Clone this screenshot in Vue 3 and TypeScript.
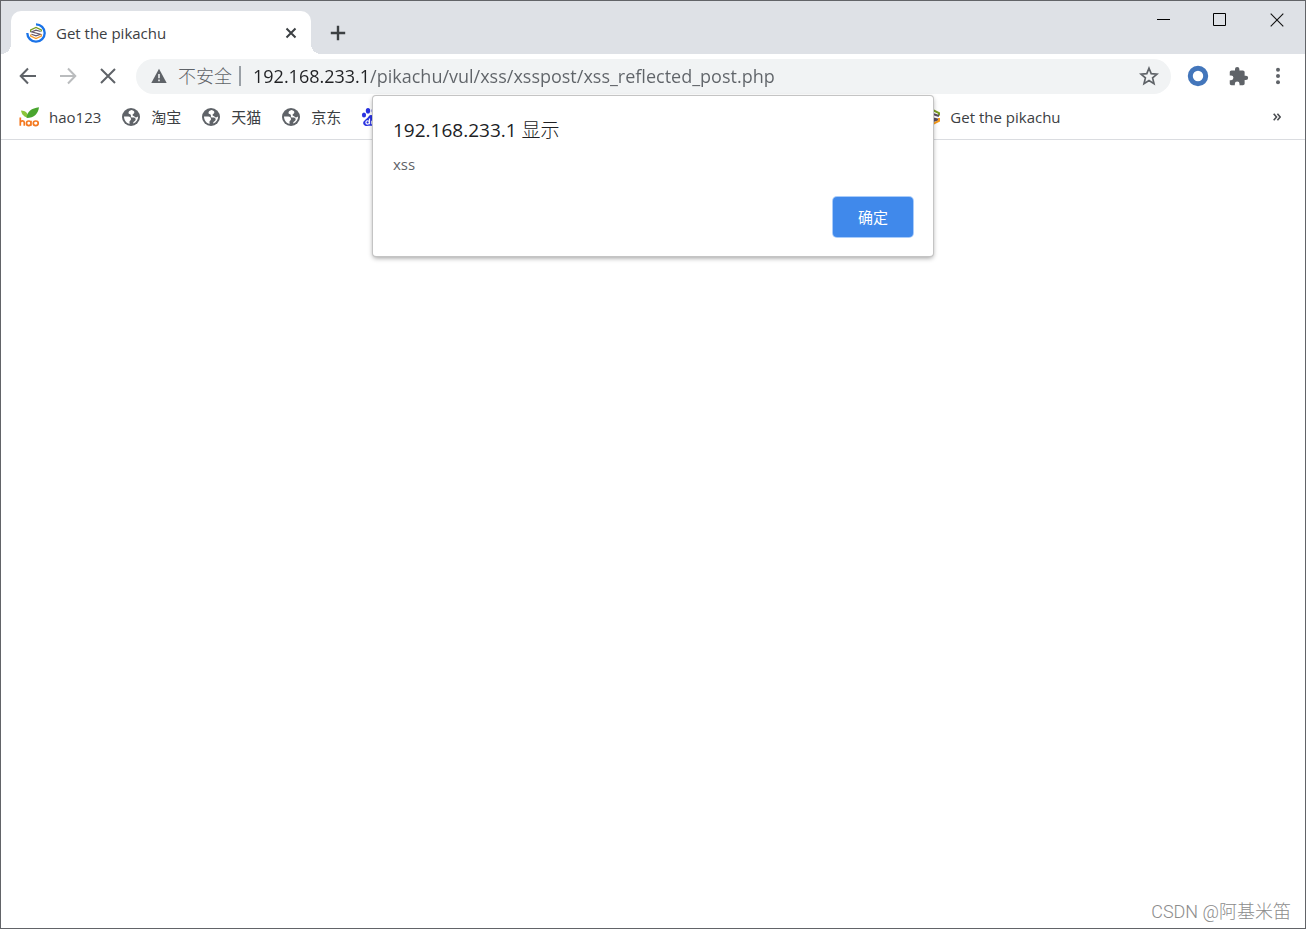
<script setup lang="ts">
import { ref } from 'vue'

interface Bookmark {
  label: string
  icon: 'hao' | 'globe'
}

const address = ref('192.168.233.1/pikachu/vul/xss/xsspost/xss_reflected_post.php')
const dialogOpen = ref(true)
const bookmarks: Bookmark[] = [
  { label: 'hao123', icon: 'hao' },
  { label: '淘宝', icon: 'globe' },
  { label: '天猫', icon: 'globe' },
  { label: '京东', icon: 'globe' },
]
</script>

<template>
  <div class="window">
    <header class="tabstrip">
      <div class="tab">
        <svg class="icon20" viewBox="0 0 20 20" aria-hidden="true">
          <path d="M10 1.3A8.7 8.7 0 1 1 1.3 10" fill="none" stroke="#1a73e8" stroke-width="2.3" />
          <path d="M4.700 9V7L10 4.500 15.300 7v1.500" fill="none" stroke="#7a9c20" stroke-width="1.300" />
          <path d="M14.600 8.500 10 7.200 5.500 8.900l9 2.400L10 12.800l-4.600-1.500" fill="none" stroke="#66566a" stroke-width="1.100" />
          <path d="M4.700 11.500V13l5.300 2.500 5.300-2.500v-1.500" fill="none" stroke="#f79a28" stroke-width="1.300" />
        </svg>
        <span class="tab-title">Get the pikachu</span>
        <button class="tab-close" aria-label="关闭标签页">
          <svg width="12" height="12" viewBox="0 0 12 12"><path d="M1.5 1.5l9 9M10.5 1.5l-9 9" stroke="#3c4043" stroke-width="2" /></svg>
        </button>
      </div>
      <button class="new-tab" aria-label="新标签页">
        <svg width="16" height="16" viewBox="0 0 16 16"><path d="M8 .8v14.4M.8 8h14.4" stroke="#3c4043" stroke-width="2.4" /></svg>
      </button>
      <div class="controls">
        <button aria-label="最小化"><svg width="14" height="14" viewBox="0 0 14 14"><path d="M1 6.5h13" stroke="#000" /></svg></button>
        <button aria-label="最大化"><svg width="14" height="14" viewBox="0 0 14 14"><path d="M.5 .5h12v12H.5z" fill="none" stroke="#000" /></svg></button>
        <button aria-label="关闭"><svg width="14" height="14" viewBox="0 0 14 14"><path d="M.7 .7l12.6 12.6M13.3 .7.7 13.3" stroke="#111" stroke-width="1.1" /></svg></button>
      </div>
    </header>

    <nav class="toolbar">
      <button class="tool" aria-label="后退">
        <svg width="18" height="18" viewBox="0 0 18 18"><path d="M17 9H2M9 1.5 1.7 9 9 16.5" fill="none" stroke="#5f6368" stroke-width="2" /></svg>
      </button>
      <button class="tool" aria-label="前进" disabled>
        <svg width="18" height="18" viewBox="0 0 18 18"><path d="M1 9h15M9 1.5 16.3 9 9 16.5" fill="none" stroke="#babcbe" stroke-width="2" /></svg>
      </button>
      <button class="tool" aria-label="停止">
        <svg width="18" height="18" viewBox="0 0 18 18"><path d="M2 2l14 14M16 2 2 16" stroke="#5f6368" stroke-width="2" /></svg>
      </button>
      <div class="omnibox">
        <svg class="warn" width="16" height="16" viewBox="0 0 16 16" aria-hidden="true">
          <path d="M8 .8 15.7 15H.3z" fill="#5f6368" />
          <path d="M8 6v4.2M8 11.4v1.9" stroke="#f1f3f4" stroke-width="1.6" />
        </svg>
        <label class="unsafe" for="address">不安全</label>
        <span class="divider"></span>
        <input id="address" v-model="address" class="address" type="text" spellcheck="false" />
        <button class="star" aria-label="为此标签页添加书签">
          <svg width="20" height="20" viewBox="0 0 20 20"><path d="m10 2.2 2.2 5.4 5.9.5-4.5 3.8 1.4 5.7-5-3.1-5 3.1 1.4-5.7-4.5-3.8 5.9-.5z" fill="none" stroke="#5f6368" stroke-width="1.7" /></svg>
        </button>
      </div>
      <button class="tool" aria-label="扩展">
        <svg width="22" height="22" viewBox="0 0 22 22"><circle cx="11" cy="11" r="7.7" fill="none" stroke="#4376bb" stroke-width="5" /></svg>
      </button>
      <button class="tool" aria-label="扩展程序">
        <svg width="21" height="21" viewBox="0 0 24 24"><path fill="#5f6368" d="M20.5 11H19V7c0-1.1-.9-2-2-2h-4V3.5a2.5 2.5 0 0 0-5 0V5H4c-1.1 0-2 .9-2 2v3.8h1.5a2.7 2.7 0 0 1 0 5.4H2V20c0 1.1.9 2 2 2h3.8v-1.5a2.7 2.7 0 0 1 5.400 0V22H17c1.1 0 2-.9 2-2v-4h1.5a2.5 2.5 0 0 0 0-5z" /></svg>
      </button>
      <button class="tool" aria-label="菜单">
        <svg width="6" height="18" viewBox="0 0 6 18" fill="#5f6368"><circle cx="3" cy="2.7" r="2" /><circle cx="3" cy="9" r="2" /><circle cx="3" cy="15.3" r="2" /></svg>
      </button>
    </nav>

    <nav class="bookmarks">
      <a v-for="item in bookmarks" :key="item.label" class="bookmark" href="#">
        <svg v-if="item.icon === 'hao'" class="icon20" viewBox="0 0 20 20" aria-hidden="true">
          <path d="M2 3.600c4.500.2 6.800 2.400 7.500 7-4-.2-6.700-2.500-7.500-7z" fill="#8cc63a" />
          <path d="M7.500 11C8 5 12.500 1 20 .3 19.200 6.500 15.500 11 7.500 11z" fill="#49a52f" />
          <path d="M1.300 10.600v8.200M1.300 15.500c.8-2.200 4-2.100 4 .2v3.100M12 13.800v5M12 16.300c0-3.100-4.500-3.100-4.500 0s4.500 3.100 4.500 0M14.300 16.300c0-3.100 4.900-3.100 4.900 0s-4.900 3.100-4.900 0" fill="none" stroke="#f47920" stroke-width="1.700" />
        </svg>
        <svg v-else class="icon20" viewBox="0 0 20 20" aria-hidden="true">
          <circle cx="10" cy="10" r="9" fill="#5f6368" />
          <path d="M10.600 3c-1.800.4-3.300 1.500-3.100 3 .2 1.300 1.600 1 2.200 1.700.7.900-.3 1.800.5 2.500.8.600 2.300-.1 3.500.6 1.400.8 1.200 2.600.1 3.300-1 .6-1.500.9-1.700 2.500 3.100-1.100 5.100-3.800 5-7-1.300 1-2.700 1.100-3.400.1-.6-.9-1.700-.5-2.100-1.500-.5-1.300 1.400-1.400 1.700-2.500.3-1.300-.8-2.100-2.700-2.700z" fill="#fff" />
          <path d="M3 9.600h4.300c1.700.1 2.700 1.100 2.700 2.600 0 1.400-1.500 1.200-1.500 2.300v2.400C5.300 16.200 3 13.300 3 9.600z" fill="#fff" />
        </svg>
        <span>{{ item.label }}</span>
      </a>
      <a class="bookmark" href="#" aria-label="百度">
        <svg class="icon20" viewBox="0 0 20 20" aria-hidden="true" fill="#2932e1">
          <ellipse cx="3" cy="8" rx="2.100" ry="2.600" />
          <ellipse cx="7" cy="3.700" rx="2.200" ry="2.800" />
          <ellipse cx="12.800" cy="3.700" rx="2.200" ry="2.800" />
          <ellipse cx="17" cy="8" rx="2.100" ry="2.600" />
          <path d="M10 8c-2 0-2.600 2.200-4.200 3.500C3.200 13.600 1.500 15 2.500 17.300c1.100 2.500 4 1.500 7.500 1.500s6.400 1 7.500-1.500c1-2.300-.7-3.700-3.300-5.800C12.600 10.200 12 8 10 8z" />
          <path d="M8.500 11.500v5.700M8.300 15.400c0-2.200-3.400-2.200-3.400 0s3.400 2.200 3.400 0M10.800 13.700v2.700c0 .8 2.700.8 2.700 0v-2.700" fill="none" stroke="#fff" stroke-width="1.200" />
        </svg>
      </a>
      <a class="bookmark pikachu" href="#">
        <svg class="icon20" viewBox="0 0 20 20" aria-hidden="true" fill="none" stroke-width="2">
          <path d="M2 6.500V5l8-3.500L19 6v2.500" stroke="#7a9c20" />
          <path d="M19 9 10 6 2 8.800l16 3.700-8 2.500-8-2.500" stroke="#5b4d60" />
          <path d="M2 13.500V15l8 3.500 9-4.500v-3" stroke="#f79a18" />
        </svg>
        <span>Get the pikachu</span>
      </a>
      <button class="more" aria-label="更多书签">
        <svg width="8" height="8" viewBox="0 0 8 8"><path d="M.7.700 3.500 4 .7 7.300M4.400.700 7.200 4 4.400 7.300" fill="none" stroke="#4a4d51" stroke-width="1.600" /></svg>
      </button>
    </nav>

    <main class="page">
      <p class="credit">CSDN @阿基米笛</p>
    </main>

    <section v-if="dialogOpen" class="dialog" role="alertdialog" aria-labelledby="dialog-title" aria-describedby="dialog-text">
      <h1 id="dialog-title">192.168.233.1 <span class="light">显示</span></h1>
      <p id="dialog-text">xss</p>
      <button class="confirm" @click="dialogOpen = false">确定</button>
    </section>
  </div>
</template>

<style>
body {
  margin: 0;
}
</style>

<style scoped>
.window {
  position: relative;
  box-sizing: border-box;
  display: flex;
  flex-direction: column;
  min-height: 100vh;
  border: 1px solid #626468;
  background: #fff;
  color: #3c4043;
  font: 15px/20px "Open Sans", "Noto Sans CJK SC", sans-serif;
}
button {
  display: flex;
  align-items: center;
  justify-content: center;
  padding: 0;
  border: 0;
  background: none;
  font: inherit;
}
svg {
  display: block;
  flex: none;
}
.icon20 {
  width: 20px;
  height: 20px;
}
.tabstrip {
  display: flex;
  align-items: flex-end;
  height: 53px;
  padding-left: 10px;
  background: #dee1e6;
}
.tab {
  position: relative;
  box-sizing: border-box;
  display: flex;
  align-items: center;
  gap: 10px;
  width: 300px;
  height: 43px;
  padding: 0 12px 0 15px;
  border-radius: 10px 10px 0 0;
  background: #fff;
}
.tab::before,
.tab::after {
  content: "";
  position: absolute;
  bottom: 0;
  width: 10px;
  height: 10px;
}
.tab::before {
  right: 100%;
  background: radial-gradient(circle at 0 0, transparent 10px, #fff 10px);
}
.tab::after {
  left: 100%;
  background: radial-gradient(circle at 100% 0, transparent 10px, #fff 10px);
}
.tab-title {
  flex: 1;
}
.tab-close {
  width: 16px;
  height: 20px;
}
.new-tab {
  width: 34px;
  height: 43px;
  margin-left: 10px;
}
.controls {
  display: flex;
  align-self: flex-start;
  margin-left: auto;
}
.controls button {
  width: 57px;
  height: 38px;
}
.toolbar {
  display: flex;
  align-items: center;
  height: 44px;
  padding: 0 7px;
}
.tool {
  width: 40px;
  height: 36px;
}
.omnibox {
  box-sizing: border-box;
  display: flex;
  flex: 1;
  align-items: center;
  height: 35px;
  margin: 0 7px 0 8px;
  padding: 0 12px 0 15px;
  border-radius: 18px;
  background: #f1f3f4;
  color: #5f6368;
  font-size: 18px;
}
.unsafe {
  margin-left: 11px;
  font-weight: 300;
}
.light {
  font-family: "Noto Sans CJK SC", sans-serif;
  font-weight: 300;
}
.divider {
  width: 2px;
  height: 20px;
  margin: 0 12px 0 7px;
  background: #9aa0a6;
}
.address {
  flex: 1;
  min-width: 0;
  height: 30px;
  padding: 0;
  border: 0;
  outline: 0;
  background: linear-gradient(90deg, #202124 116px, #5f6368 116px);
  background-clip: text;
  -webkit-background-clip: text;
  color: transparent;
  font: inherit;
}
.star {
  width: 20px;
  height: 30px;
}
.bookmarks {
  display: flex;
  align-items: center;
  gap: 20px;
  height: 38px;
  padding: 0 18px 3px;
  border-bottom: 1px solid #dadce0;
}
.bookmark {
  display: flex;
  align-items: center;
  gap: 10px;
  color: inherit;
  text-decoration: none;
  white-space: nowrap;
}
.pikachu {
  margin-left: 519px;
}
.more {
  width: 20px;
  height: 20px;
  margin-left: auto;
}
.page {
  display: flex;
  flex: 1;
  align-items: flex-end;
  justify-content: flex-end;
}
.credit {
  margin: 0 14px 3px 0;
  color: #8c8c8c;
  font: 300 18px/26px Roboto, "Noto Sans CJK SC", sans-serif;
}
.dialog {
  position: absolute;
  top: 95px;
  left: 50%;
  box-sizing: border-box;
  width: 560px;
  padding: 20px 20px 19px;
  border-radius: 3px;
  background: #fff;
  box-shadow: 0 0 0 1px #c4c4c4, 0 2px 5px rgba(0, 0, 0, 0.4);
  transform: translateX(-50%);
}
.dialog h1 {
  margin: 0;
  color: #202124;
  font-size: 19px;
  font-weight: 400;
  line-height: 26px;
}
.dialog p {
  margin: 11px 0 23px;
  color: #5f6368;
}
.confirm {
  width: 80px;
  height: 40px;
  margin-left: auto;
  border-radius: 4px;
  background: #4089eb;
  box-shadow: 0 0 0 1px #a9ccfa;
  color: #fff;
}
</style>
